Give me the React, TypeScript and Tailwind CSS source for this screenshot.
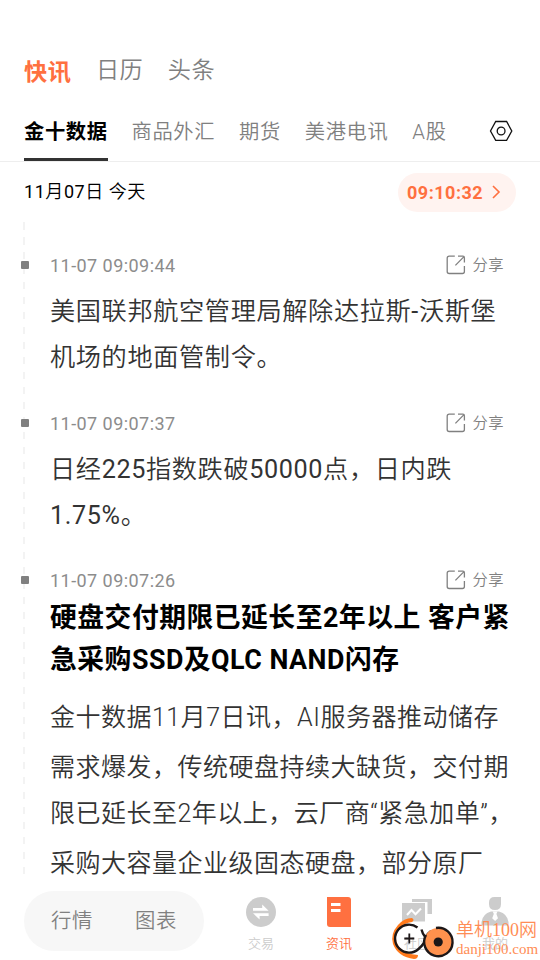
import type { ReactNode } from "react";

const sections = ["快讯", "日历", "头条"];

const channels = ["金十数据", "商品外汇", "期货", "美港电讯", "A股"];

function SettingsIcon() {
  return (
    <svg width="24" height="22" viewBox="0 0 24 22" fill="none" stroke="#111" strokeWidth="1.3">
      <path d="M6.7 1.5H17.6L22.8 11L17.6 20.3H6.7L1.5 11Z" />
      <circle cx="12.1" cy="11" r="3.9" />
    </svg>
  );
}

function ShareIcon() {
  return (
    <svg width="20" height="20" viewBox="0 0 20 20" fill="none" stroke="#808080" strokeWidth="1.3">
      <path d="M8.8 1.2H3.2Q1.2 1.2 1.2 3.2V16.5Q1.2 18.5 3.2 18.5H16.4Q18.4 18.5 18.4 16.5V11" />
      <path d="M12 1.2H16.9Q18.4 1.2 18.4 2.7V7.6M18 1.6L9.4 10.4" />
    </svg>
  );
}

function TradeIcon() {
  return (
    <svg width="30" height="30" viewBox="0 0 30 30">
      <circle cx="15" cy="15" r="15" fill="#ccc" />
      <path d="M7 11H16.2V7.6L22.6 13.7H7ZM22.6 16.3V19H13.6V22.4L7 16.3Z" fill="#fff" />
    </svg>
  );
}

function NewsIcon() {
  return (
    <svg width="24" height="30" viewBox="0 0 24 30">
      <path d="M0 0H21Q24 0 24 3V30H3Q0 30 0 27Z" fill="#ff7040" />
      <path d="M4 6H13.5V9H4ZM4 12H13.5V15H4Z" fill="#fff" />
    </svg>
  );
}

function CommunityIcon() {
  return (
    <svg width="30" height="30" viewBox="0 0 30 30">
      <path d="M10 2H30V17H25.5V5H10Z" fill="#ccc" />
      <path d="M0 6H23V24.5H0Z" fill="#ccc" />
      <path d="M5 18L9.5 13L13.5 17.2L19 11.5" fill="none" stroke="#fff" strokeWidth="2" />
    </svg>
  );
}

function ProfileIcon() {
  return (
    <svg width="28" height="30" viewBox="0 0 28 30">
      <path d="M8 5.5Q8 0 13.5 0H20V7Q20 13 14 13Q8 13 8 7Z" fill="#ccc" />
      <path d="M0.5 28.5V25Q1.5 17 10 14.5H18Q26.5 17 27.5 25V28.5Z" fill="#ccc" />
      <path d="M11.8 14.5H16.4L15.4 17L17 21.2L14.1 24L11.2 21.2L12.8 17Z" fill="#fff" />
    </svg>
  );
}

type ItemProps = {
  time: string;
  className: string;
  children: ReactNode;
};

function NewsItem({ time, className, children }: ItemProps) {
  return (
    <article className={className}>
      <div className="flex h-6 items-center pr-9">
        <span className="-ml-[29px] mr-[21px] size-2 rounded-[1px] bg-[#808080]" />
        <time className="flex-1 pt-[2px] text-[18px] leading-6 tracking-[0.45px] text-[#8c8c8c]">
          {time}
        </time>
        <button className="flex items-center gap-[7px] text-[15.3px] font-[350] tracking-[0.4px] text-[#808080]">
          <ShareIcon />
          分享
        </button>
      </div>
      {children}
    </article>
  );
}

const tabs = [
  { label: "交易", icon: <TradeIcon />, color: "text-[#ccc]" },
  { label: "资讯", icon: <NewsIcon />, color: "text-[#ff7040]" },
  { label: "社区", icon: <CommunityIcon />, color: "text-[#ccc]" },
  { label: "我的", icon: <ProfileIcon />, color: "text-[#ccc]" },
];

function Watermark() {
  return (
    <div className="pointer-events-none absolute top-[917px] left-[390px] flex">
      <svg width="66" height="43" viewBox="0 0 66 43" fill="none">
        <path d="M22 1Q14 1 8 8Q0 17 3 27Q8 40 24 42Q28 42 28 38Q15 37 9 30Q2 20 10 11Q14 6 22 5Q25 3 22 1Z" fill="#ff7a1c" />
        <path d="M27.5 10.5A14 14 0 1 0 28.5 32Q32 29 35 24.5" stroke="#1d1718" strokeWidth="2.4" />
        <path d="M31.5 12.5Q32.5 17 35.5 20.5Q37.5 16.5 41 14" stroke="#1d1718" strokeWidth="2.4" />
        <path d="M19.3 16.5V26.5M14.3 21.5H24.3" stroke="#1d1718" strokeWidth="1.8" />
        <circle cx="48.2" cy="25" r="14" fill="#ff914d" />
        <path d="M46 11A14.2 14.2 0 1 1 36 18" stroke="#1d1718" strokeWidth="2.4" />
        <circle cx="48.2" cy="25" r="4.6" fill="#1d1718" />
      </svg>
      <div className="font-['Liberation_Serif','Noto_Sans_CJK_SC',serif] text-[#ff8d55]">
        <p className="pt-[3px] text-[18px] leading-[20px] font-[350]">单机100网</p>
        <p className="text-[15px] leading-[18px]">danji100.com</p>
      </div>
    </div>
  );
}

// digits stay at regular weight, the CJK glyphs come from the thinner cut
function Mixed({ text }: { text: string }) {
  return text.split(/([0-9.%-]+)/).map((part, i) =>
    i % 2 === 1 ? (
      <span key={i} className="font-normal">
        {part}
      </span>
    ) : (
      part
    ),
  );
}

export default function App() {
  return (
    <div className="relative flex h-[960px] w-[540px] flex-col overflow-hidden bg-white font-[Roboto,'Noto_Sans_CJK_SC',sans-serif] whitespace-nowrap">
      <header className="border-b border-[#eee] pt-[50px]">
        <nav className="flex h-10 items-center gap-[24.5px] pl-6 text-[23.2px] leading-10 font-[350] tracking-[0.5px] text-[#808080]">
          {sections.map((name, i) => (
            <span key={name} className={i === 0 ? "pt-1 font-bold text-[#ff7040]" : ""}>
              {name}
            </span>
          ))}
        </nav>
        <div className="flex h-[71px] pt-5 pr-[27px] pl-6">
          <nav className="flex flex-1 gap-[24px] text-[20.3px] leading-[44px] font-[350] tracking-[0.6px] text-[#808080]">
            {channels.map((name, i) => (
              <span
                key={name}
                className={i === 0 ? "h-[51px] border-b-[3px] border-[#333] font-bold text-black" : ""}
              >
                {name}
              </span>
            ))}
          </nav>
          <div className="flex h-[42px] items-center">
            <SettingsIcon />
          </div>
        </div>
      </header>

      <div className="flex h-[60px] items-center justify-between pr-6 pl-6">
        <span className="pb-px text-[18px] font-[350] tracking-[0.55px] text-black">
          <Mixed text="11月07日 今天" />
        </span>
        <span className="flex h-[39px] w-[118px] items-center gap-[9px] rounded-full bg-[#fff3f0] pl-[9px] text-[18px] font-bold tracking-[0.5px] text-[#ff7040]">
          09:10:32
          <svg width="9" height="14" viewBox="0 0 9 14" fill="none" stroke="#ff7040" strokeWidth="1.6">
            <path d="M1 1L7 7L1 13" />
          </svg>
        </span>
      </div>

      <main className="flex h-[653px] pl-[23px]">
        <div className="w-[2px] shrink-0 bg-[repeating-linear-gradient(to_bottom,#f3f3f3_0_7.5px,transparent_7.5px_15px)]" />
        <div className="flex-1 pl-[25px]">
          <NewsItem time="11-07 09:09:44" className="pt-[31px]">
            <p className="pt-[12px] text-[25.2px] leading-[46px] font-[350] tracking-[0.62px] text-[#333]">
              <Mixed text="美国联邦航空管理局解除达拉斯-沃斯堡" />
              <br />
              机场的地面管制令。
            </p>
          </NewsItem>
          <NewsItem time="11-07 09:07:37" className="pt-[30px]">
            <p className="pt-[12px] text-[25.2px] leading-[46px] font-[350] tracking-[0.62px] text-[#333]">
              <Mixed text="日经225指数跌破50000点，日内跌" />
              <br />
              <Mixed text="1.75%。" />
            </p>
          </NewsItem>
          <NewsItem time="11-07 09:07:26" className="pt-[29px]">
            <h2 className="pt-[5px] text-[26.8px] leading-[42px] font-bold tracking-[0.5px] text-black">
              硬盘交付期限已延长至2年以上 客户紧
              <br />
              急采购SSD及QLC NAND闪存
            </h2>
            <p className="pt-[12px] text-[25px] font-[350] tracking-[0.5px] text-[#333]">
              <span className="block leading-[50px]">金十数据11月7日讯，AI服务器推动储存</span>
              <span className="block leading-[50px]">需求爆发，传统硬盘持续大缺货，交付期</span>
              <span className="block leading-[42px]">限已延长至2年以上，云厂商“紧急加单”，</span>
              <span className="block leading-[58px]">采购大容量企业级固态硬盘，部分原厂</span>
            </p>
          </NewsItem>
        </div>
      </main>

      <footer className="flex items-start pt-4 pl-6">
        <div className="flex h-[60px] w-[180px] items-center gap-[42px] rounded-full bg-[#f7f7f7] pt-px pl-[27px] text-[20.4px] font-[350] tracking-[0.6px] text-[#808080]">
          <span>行情</span>
          <span>图表</span>
        </div>
        <nav className="ml-[18px] flex pt-[6px]">
          {tabs.map((tab) => (
            <div key={tab.label} className="flex w-[78px] flex-col items-center">
              {tab.icon}
              <span className={`pt-[7px] text-[13px] leading-5 font-[350] ${tab.color}`}>
                {tab.label}
              </span>
            </div>
          ))}
        </nav>
      </footer>
      <Watermark />
    </div>
  );
}
